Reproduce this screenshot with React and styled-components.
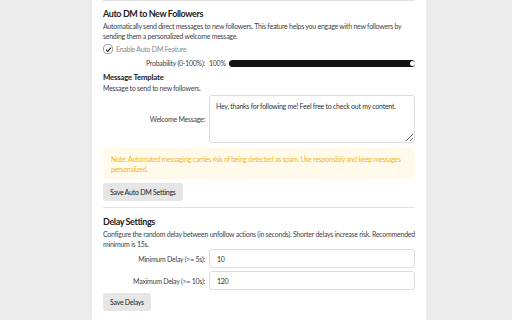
import styled, { createGlobalStyle } from "styled-components";

const GlobalStyle = createGlobalStyle`
  html, body {
    margin: 0;
    padding: 0;
    background: #ececec;
    font-family: Lato, "Open Sans", sans-serif;
    color: #333;
  }
`;

const Page = styled.div`
  width: 512px;
  height: 320px;
  overflow: hidden;
`;

const Card = styled.section`
  margin-left: 92px;
  width: 334px;
  min-height: 330px;
  box-sizing: border-box;
  background: #fff;
  padding: 0 11px;
  font-size: 7px;
  letter-spacing: -0.26px;
`;

const Divider = styled.hr`
  border: 0;
  border-top: 1px solid #e3e3e3;
  margin: ${p => p.$margin || "0"};
`;

const Title = styled.h3`
  font-size: 9px;
  font-weight: 700;
  letter-spacing: -0.4px;
  line-height: 14px;
  color: #222;
  margin: ${p => p.$top || 6}px 0 0;
`;

const SubTitle = styled.h4`
  font-size: 7.8px;
  font-weight: 700;
  letter-spacing: -0.2px;
  line-height: 12px;
  color: #222;
  margin: 4px 0 0;
`;

const Text = styled.p`
  line-height: 10px;
  color: #444;
  margin: 0;
`;

const CheckRow = styled.label`
  display: flex;
  align-items: center;
  gap: 3px;
  height: 12px;
  margin-top: 2px;
  color: #8a8a8a;
`;

const Check = styled.span`
  width: 10px;
  height: 10px;
  box-sizing: border-box;
  border: 1px solid #a0a0a0;
  border-radius: 4px;
  display: flex;
  align-items: center;
  justify-content: center;
`;

const Row = styled.div`
  display: flex;
  align-items: center;
  margin-top: ${p => p.$gap || 0}px;
`;

const Label = styled.span`
  width: 106px;
  flex-shrink: 0;
  text-align: right;
  padding-right: 4px;
  box-sizing: border-box;
  color: #444;
`;

const Value = styled.span`
  color: #444;
  margin-right: 3px;
`;

const Range = styled.input`
  flex: 1;
  margin: 0;
  height: 8px;
  appearance: none;
  -webkit-appearance: none;
  background: transparent;

  &::-webkit-slider-runnable-track {
    height: 7px;
    background: #111;
    border-radius: 4px;
  }
  &::-webkit-slider-thumb {
    -webkit-appearance: none;
    width: 5px;
    height: 5px;
    margin-top: 1px;
    border-radius: 50%;
    background: #fff;
    border: 0;
  }
`;

const TextArea = styled.textarea`
  flex: 1;
  height: 48px;
  box-sizing: border-box;
  border: 1px solid #dcdcdc;
  border-radius: 3px;
  padding: 5px 6px;
  font-family: inherit;
  font-size: 7px;
  letter-spacing: -0.26px;
  line-height: 10px;
  color: #333;
  resize: vertical;
  margin: 0;
`;

const Input = styled.input`
  flex: 1;
  height: 19px;
  box-sizing: border-box;
  border: 1px solid #dcdcdc;
  border-radius: 3px;
  padding: 0 7px;
  font-family: inherit;
  font-size: 7px;
  letter-spacing: -0.26px;
  color: #333;
  margin: 0;
`;

const Note = styled.div`
  margin-top: 5px;
  background: #fffaea;
  border-radius: 4px;
  padding: 6px 8px 5px;
  line-height: 10px;
  color: #f2b82a;
`;

const Button = styled.button`
  display: block;
  margin-top: ${p => p.$gap || 4}px;
  height: 18px;
  padding: 0 7px;
  border: 0;
  border-radius: 3px;
  background: #e6e6e6;
  font-family: inherit;
  font-size: 7px;
  letter-spacing: -0.26px;
  color: #222;
`;

export default function App() {
  return (
    <Page>
      <GlobalStyle />
      <Card>
        <Divider />
        <Title>Auto DM to New Followers</Title>
        <Text>
          Automatically send direct messages to new followers. This feature helps you engage with new followers by
          sending them a personalized welcome message.
        </Text>
        <CheckRow>
          <Check>
            <svg width="7" height="7" viewBox="0 0 10 10">
              <path d="M1.5 5.2 L4 7.8 L8.6 2.2" fill="none" stroke="#222" strokeWidth="1.6" />
            </svg>
          </Check>
          Enable Auto DM Feature
        </CheckRow>
        <Row $gap={4}>
          <Label>Probability (0-100%):</Label>
          <Value>100%</Value>
          <Range type="range" min="0" max="100" defaultValue="100" />
        </Row>
        <SubTitle>Message Template</SubTitle>
        <Text>Message to send to new followers.</Text>
        <Row $gap={2}>
          <Label>Welcome Message:</Label>
          <TextArea defaultValue="Hey, thanks for following me! Feel free to check out my content." />
        </Row>
        <Note>
          Note: Automated messaging carries risk of being detected as spam. Use responsibly and keep messages
          personalized.
        </Note>
        <Button>Save Auto DM Settings</Button>
        <Divider $margin="6px 0 0" />
        <Title $top={7}>Delay Settings</Title>
        <Text>
          Configure the random delay between unfollow actions (in seconds). Shorter delays increase risk. Recommended
          minimum is 15s.
        </Text>
        <Row>
          <Label>Minimum Delay (&gt;= 5s):</Label>
          <Input defaultValue="10" />
        </Row>
        <Row $gap={3}>
          <Label>Maximum Delay (&gt;= 10s):</Label>
          <Input defaultValue="120" />
        </Row>
        <Button $gap={3}>Save Delays</Button>
      </Card>
    </Page>
  );
}
